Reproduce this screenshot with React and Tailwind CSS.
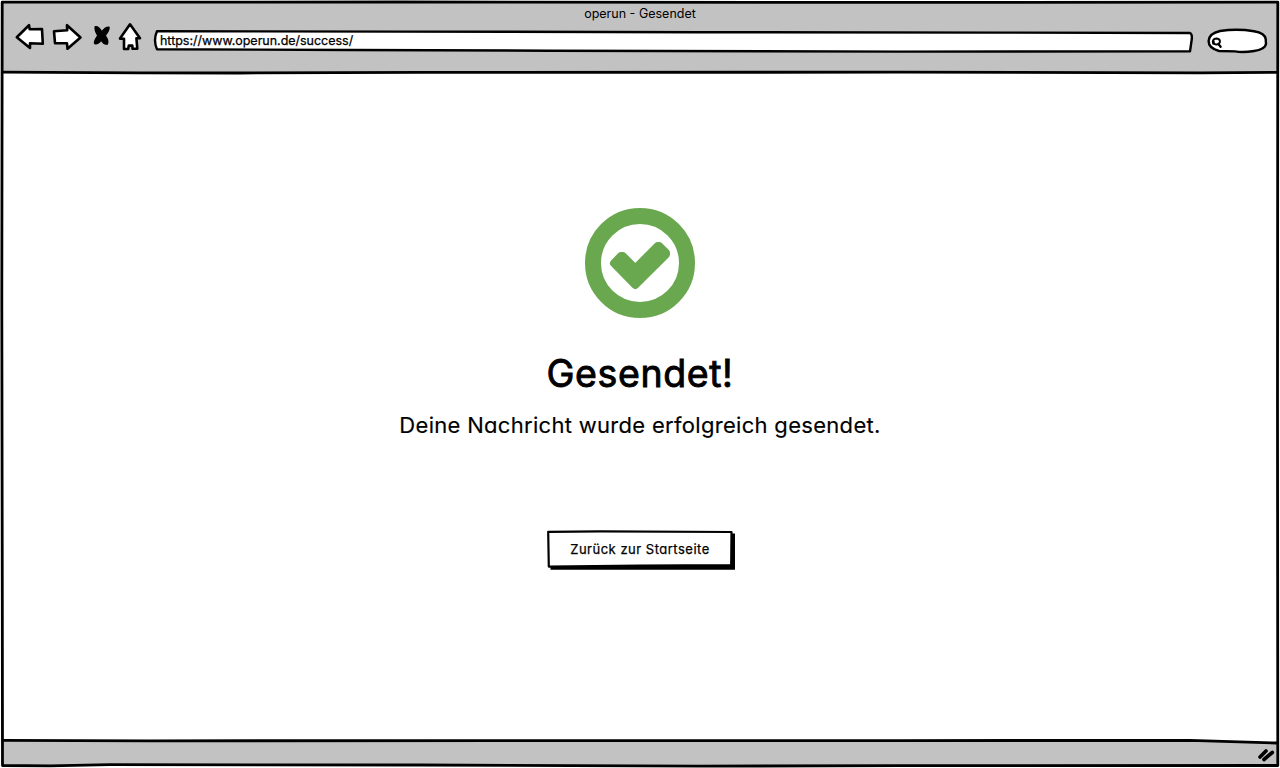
import React from "react";

const ink = { stroke: "#000", strokeLinecap: "round", strokeLinejoin: "round" };

function NavIcon({ viewBox, className, children }) {
  return (
    <svg viewBox={viewBox} className={`shrink-0 ${className}`} fill="#fff" strokeWidth="2.6" {...ink}>
      {children}
    </svg>
  );
}

function Toolbar() {
  return (
    <div className="flex h-[36px] items-start pl-[14px]">
      <NavIcon viewBox="14 20 32 32" className="h-8 w-8">
        <path d="M16.8 37.2 29 25.2 29.7 29.3 42 29 42.8 43.8 30 43.2 30 48Z" />
      </NavIcon>
      <NavIcon viewBox="50 20 34 32" className="ml-1 h-8 w-[34px]">
        <path d="M80.5 37.5 67 25.2 67.2 30.2 54 31.2 55 43.2 67 43.3 67.5 48.8Z" />
      </NavIcon>
      <NavIcon viewBox="90 20 24 32" className="ml-1.5 h-8 w-6">
        <path
          d="M95.2 26.8Q98.8 26.2 101.8 32Q105 27 109 27.2Q109.6 30 105.2 35.6Q109 40.8 107.4 44Q104 45 101.2 40Q98 44.4 94.6 43.6Q93.8 41 97.8 35.6Q94.6 30.5 95.2 26.8Z"
          fill="#000"
          strokeWidth="1.4"
        />
      </NavIcon>
      <NavIcon viewBox="116 20 28 32" className="ml-0.5 h-8 w-7">
        <path d="M130 24.3 140 38.3 136.4 38.2 137.3 48.6 132.6 48.8 132.3 45.6 128.8 45.6 128.2 49 124 49 124 38.7 120 38.6Z" />
      </NavIcon>

      <div className="relative ml-[8px] mt-[8px] flex h-[26px] w-[1042px] items-center pl-2">
        <svg viewBox="152 28 1042 26" className="absolute inset-0 h-full w-full" fill="#fff" strokeWidth="2.4" {...ink}>
          <path d="M157 31.3 400 31.6 700 32.2 1000 32.6 1190 33 Q1192.3 34 1191.8 39 L1190 51.4 900 51.6 550 50.7 350 50 157 49.2 Q153 40 157 31.3Z" />
        </svg>
        <span className="relative whitespace-nowrap text-[12.5px] leading-4 tracking-[-0.02px] [-webkit-text-stroke:0.25px_#000]">https://www.operun.de/success/</span>
      </div>

      <svg viewBox="1206 26 64 30" className="ml-[12px] mt-[6px] h-[30px] w-16 shrink-0" fill="#fff" strokeWidth="2.4" {...ink}>
        <path d="M1220 31 Q1237 28.5 1254 31.2 Q1265 33 1265.7 39 L1266 44 Q1265 49.5 1254 51 Q1243 52.8 1235 51.4 L1219 51 Q1208.5 48 1208.6 41 Q1209 33.5 1220 31Z" />
        <path d="M1213.2 43.8Q1211.6 39 1216.6 38.6Q1220.6 39 1219.8 42.4Q1218.6 45.2 1215.4 44.4Q1213.4 43.8 1213.6 41.4" strokeWidth="2" />
        <path d="M1218.4 44 1220.6 46.8" strokeWidth="2.3" />
      </svg>
    </div>
  );
}

function WindowOutline() {
  return (
    <svg viewBox="0 0 1280 768" className="pointer-events-none absolute inset-0 h-full w-full" fill="none" strokeWidth="2.8" {...ink}>
      <path d="M2.2 2.2 400 2 900 2.4 1277.8 2.2 1277.5 400 1277.8 765.5 900 765.6 700 766.2 420 765 110 764.7 50 765.8 2.5 765.5 2.3 600 1.8 300Z" />
      <path d="M3 72.2 140 72.8 240 73 420 72.3 900 72.2 1200 72.8 1277 72.3" />
      <path d="M3 740.3 150 740.8 500 740.6 900 740.6 1190 740.4 1277 743" />
    </svg>
  );
}

function SuccessIcon() {
  return (
    <svg viewBox="585 208 110 110" className="h-[110px] w-[110px]">
      <circle cx="640" cy="263" r="47" fill="none" stroke="#6aa84f" strokeWidth="16" />
      <path d="M614 263.2 621 256 622.8 256 635.3 268.5 657.7 246 659.2 246 666 252.8 666 254.3 635.3 285Z" fill="#6aa84f" stroke="#6aa84f" strokeWidth="8" strokeLinejoin="round" />
    </svg>
  );
}

export default function App() {
  return (
    <div className="relative flex h-[768px] w-[1280px] flex-col overflow-hidden bg-white text-black [font-family:Inter,'Liberation_Sans',sans-serif] [font-feature-settings:'cv11','ss03']">
      <header className="mx-[2px] mt-[2px] h-[70px] bg-[#c2c2c2]">
        <h1 className="h-[18px] pt-[4px] text-center text-[12.5px] leading-4">operun - Gesendet</h1>
        <div className="-ml-[2px]">
          <Toolbar />
        </div>
      </header>

      <main className="flex flex-1 flex-col items-center pt-[136px]">
        <SuccessIcon />
        <h2 className="mt-[31px] whitespace-nowrap text-[37.5px] leading-[50px] tracking-[0.6px] [-webkit-text-stroke:0.9px_#000]">Gesendet!</h2>
        <p className="mt-[11px] whitespace-nowrap text-[22px] leading-[30px] tracking-[0.3px] [-webkit-text-stroke:0.15px_#000]">Deine Nachricht wurde erfolgreich gesendet.</p>
        <button className="relative left-[1px] mt-[89px] flex h-[40px] w-[190px] items-center justify-center">
          <svg viewBox="546 529 190 42" className="absolute left-0 top-0 h-[42px] w-[190px]" fill="none" {...ink}>
            <path d="M552 535H733.5V568.2H552Z" fill="#000" strokeWidth="3" strokeLinejoin="miter" />
            <path d="M548.2 531.8 600 531.4 731.5 532 731.2 565.2 640 565.6 548.8 566.6Z" fill="#fff" strokeWidth="2.2" />
          </svg>
          <span className="relative -left-[1px] top-[1px] whitespace-nowrap text-[13px] tracking-[0.5px] [-webkit-text-stroke:0.25px_#000]">Zurück zur Startseite</span>
        </button>
      </main>

      <footer className="mx-[2px] mb-[2px] flex h-[25px] justify-end bg-[#c2c2c2] [clip-path:polygon(0_0,93%_0,100%_2px,100%_100%,0_100%)]">
        <svg viewBox="1256 746 20 18" className="mr-[2px] mt-[5px] h-[18px] w-5" fill="none" strokeWidth="3.6" {...ink}>
          <path d="M1260 757 1266 751M1264 759.5 1272.3 752.5" />
        </svg>
      </footer>
      <WindowOutline />
    </div>
  );
}
